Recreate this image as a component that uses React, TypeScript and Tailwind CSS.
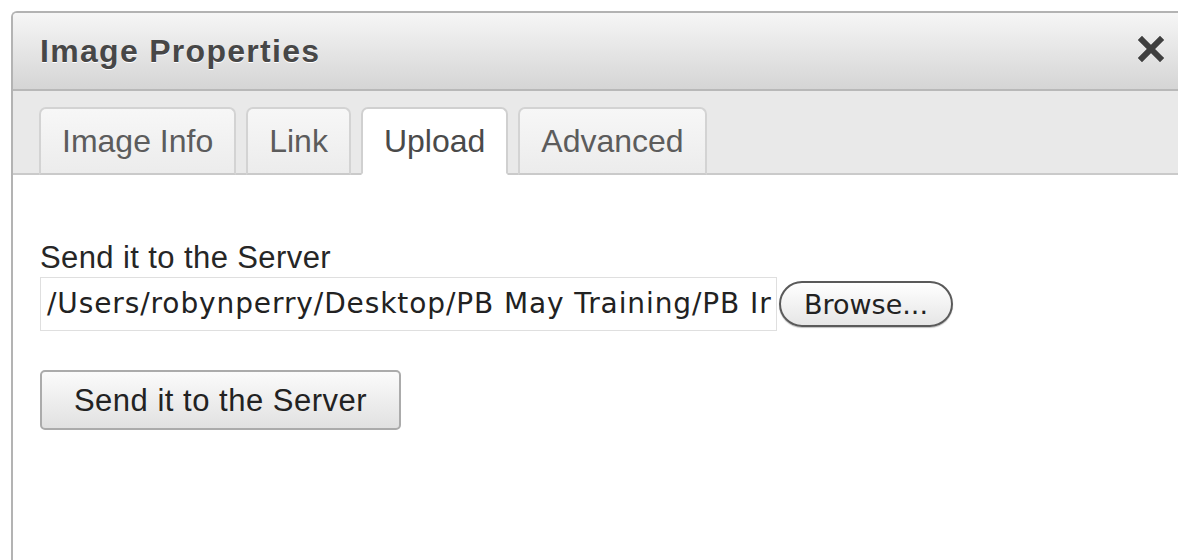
const tabs = [
  { label: 'Image Info', active: false },
  { label: 'Link', active: false },
  { label: 'Upload', active: true },
  { label: 'Advanced', active: false },
]

function CloseIcon() {
  return (
    <svg width="26" height="26" viewBox="0 0 26 26" className="shrink-0 -mt-[4px]">
      <path d="M4 4 L22 22 M22 4 L4 22" stroke="#3f3f3f" strokeWidth="6" strokeLinecap="square" fill="none" />
    </svg>
  )
}

export default function App() {
  return (
    <div className="w-[1178px] h-[560px] overflow-hidden bg-white font-['Liberation_Sans',Arial,sans-serif]">
      <div className="ml-[11px] mt-[11px] w-[1200px] h-[600px] flex flex-col border-l-2 border-t-2 border-[#b3b3b3] rounded-tl-[6px] overflow-hidden">
        {/* title bar */}
        <div className="h-[78px] shrink-0 flex items-center justify-between pl-[27px] pr-[47px] bg-gradient-to-b from-[#f6f6f6] to-[#d5d5d5] border-b-2 border-[#b8b8b8]">
          <h1 className="text-[32px] leading-none font-bold tracking-[1.3px] text-[#474747] [text-shadow:0_1px_0_#ffffff]">Image Properties</h1>
          <CloseIcon />
        </div>

        {/* tab strip */}
        <div className="h-[84px] shrink-0 flex items-end gap-[10px] pl-[26px] bg-[#e9e9e9] border-b-2 border-[#cacaca]">
          {tabs.map((t) => (
            <div
              key={t.label}
              className={`h-[68px] -mb-[2px] px-[21px] pt-[16px] rounded-t-[7px] border-2 text-[32px] leading-none ${
                t.active
                  ? 'bg-white border-[#d0d0d0] border-b-white text-[#4a4a4a]'
                  : 'bg-gradient-to-b from-[#f7f7f7] to-[#ececec] border-[#d3d3d3] border-b-[#cacaca] text-[#5c5c5c]'
              }`}
            >
              {t.label}
            </div>
          ))}
        </div>

        {/* upload panel */}
        <div className="flex-1 bg-white pl-[27px] pt-[67px]">
          <div className="text-[31px] leading-none tracking-[0.4px] text-[#262626]">Send it to the Server</div>
          <div className="mt-[4px] flex items-center gap-[2px]">
            <div className="w-[737px] h-[54px] flex items-center pl-[6px] border border-[#dfdfdf] overflow-hidden whitespace-nowrap font-['DejaVu_Sans',sans-serif] text-[28px] tracking-[0.9px] text-[#222]">
              /Users/robynperry/Desktop/PB May Training/PB Ir
            </div>
            <button className="w-[174px] h-[46px] rounded-full border-2 border-[#5a5a5a] bg-gradient-to-b from-white to-[#e6e6e6] shadow-[0_1px_1px_rgba(0,0,0,0.25)] font-['DejaVu_Sans',sans-serif] text-[27px] leading-none text-[#222]">
              Browse...
            </button>
          </div>
          <button className="mt-[39px] w-[361px] h-[60px] rounded-[5px] border-2 border-[#ababab] bg-gradient-to-b from-[#fbfbfb] to-[#e1e1e1] text-[31px] leading-none tracking-[0.5px] text-[#222]">
            Send it to the Server
          </button>
        </div>
      </div>
    </div>
  )
}
